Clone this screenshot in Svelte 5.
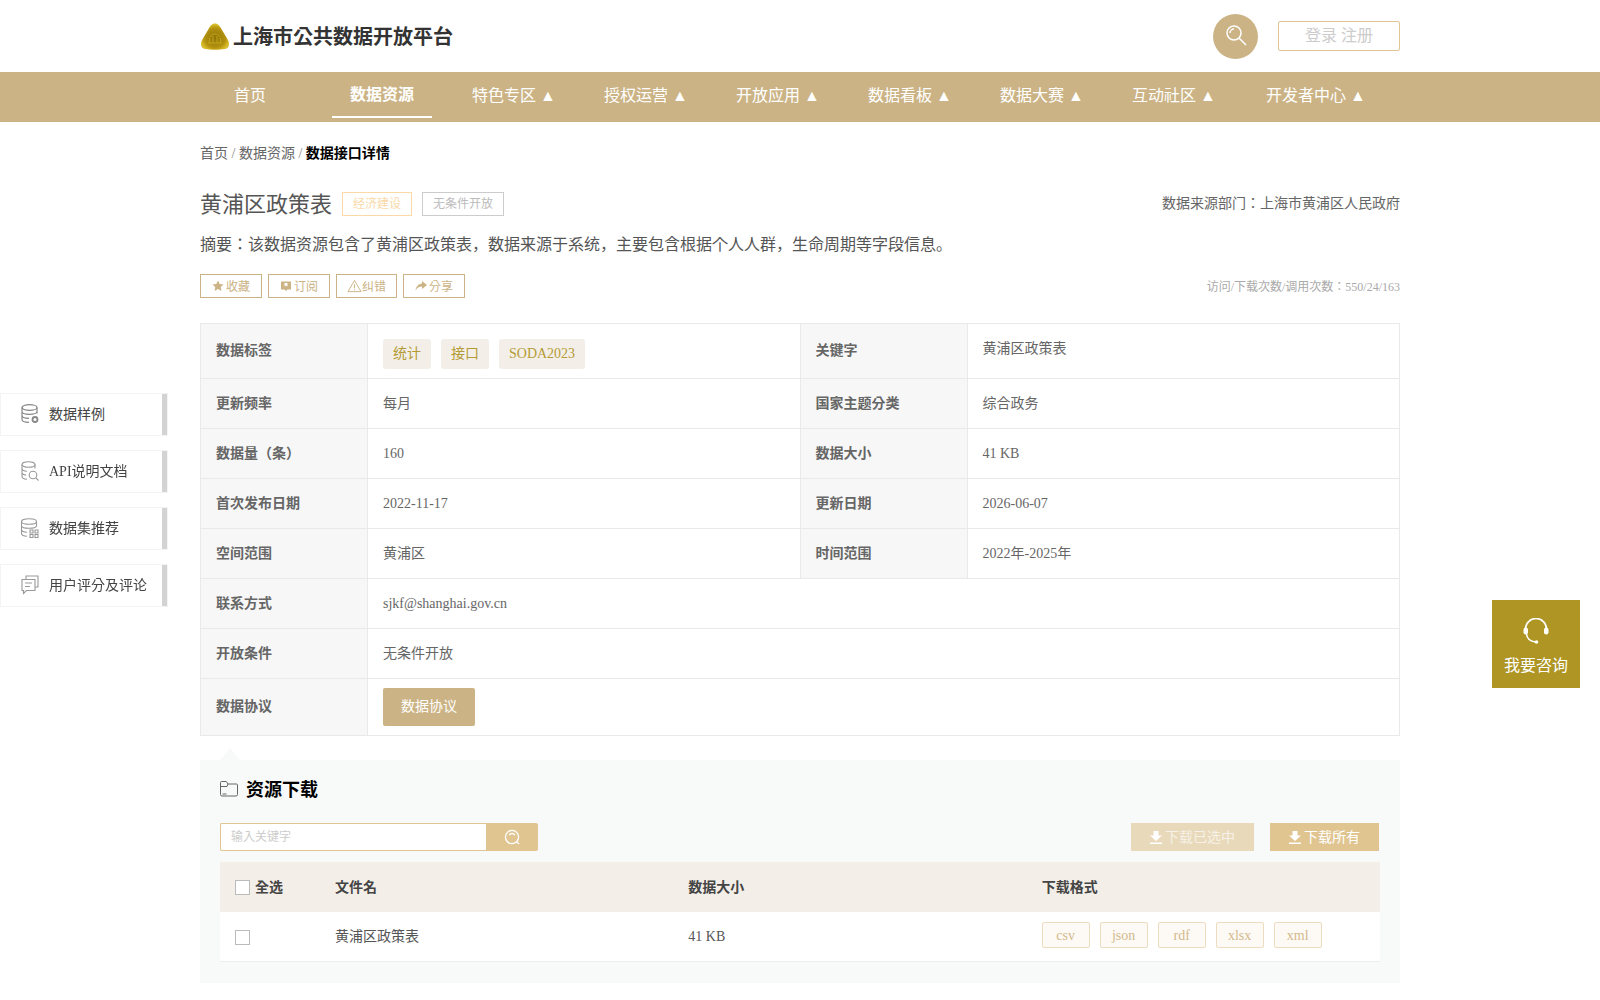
<script>
  const navItems = [
    { label: "首页" },
    { label: "数据资源", active: true },
    { label: "特色专区 ▲" },
    { label: "授权运营 ▲" },
    { label: "开放应用 ▲" },
    { label: "数据看板 ▲" },
    { label: "数据大赛 ▲" },
    { label: "互动社区 ▲" },
    { label: "开发者中心 ▲" },
  ];

  const rows = [
    ["更新频率", "每月", "国家主题分类", "综合政务"],
    ["数据量（条）", "160", "数据大小", "41 KB"],
    ["首次发布日期", "2022-11-17", "更新日期", "2026-06-07"],
    ["空间范围", "黄浦区", "时间范围", "2022年-2025年"],
  ];

  const formats = ["csv", "json", "rdf", "xlsx", "xml"];

  // han text sits lower than latin in the fallback font
  const isHan = (v) => /[\u4e00-\u9fff]/.test(v);
</script>

<header class="top wrap">
  <div class="brand">
    <svg class="logo" viewBox="0 0 30 27" width="30" height="27">
      <defs>
        <radialGradient id="gold" cx="50%" cy="55%" r="62%">
          <stop offset="0%" stop-color="#8f7408" />
          <stop offset="60%" stop-color="#b3920f" />
          <stop offset="88%" stop-color="#e2c52c" />
          <stop offset="100%" stop-color="#7b6006" />
        </radialGradient>
      </defs>
      <path
        d="M15 .5c3 0 5 2.500 7 6.500l6 10c2 4 1 8-3 9-6 1-14 1-20 0-4-1-5-5-3-9l6-10c2-4 4-6.500 7-6.500z"
        fill="url(#gold)"
      />
      <path
        d="M8 20h14M9.500 20v-5M13 20v-7M17 20v-7M20.500 20v-5M10 14c2-4 8-4 10 0"
        fill="none"
        stroke="#c2a31a"
        stroke-width="1"
      />
    </svg>
    <span>上海市公共数据开放平台</span>
  </div>
  <div class="top_right">
    <span class="search_circle">
      <svg viewBox="0 0 24 24" width="24" height="24" fill="none" stroke="#fff" stroke-width="1.500">
        <circle cx="10" cy="9" r="7" />
        <path d="M15 14l7 7M6 9a4 4 0 0 1 4-4" />
      </svg>
    </span>
    <a class="login" href="/">登录 注册</a>
  </div>
</header>

<nav>
  <ul class="wrap">
    {#each navItems as item}
      <li class:active={item.active}>{item.label}</li>
    {/each}
  </ul>
</nav>

<main class="wrap">
  <div class="crumbs">首页 <i>/</i> 数据资源 <i>/</i> <b>数据接口详情</b></div>

  <div class="title_row">
    <h1>黄浦区政策表</h1>
    <span class="tag orange">经济建设</span>
    <span class="tag grey">无条件开放</span>
    <span class="source">数据来源部门：上海市黄浦区人民政府</span>
  </div>

  <p class="abstract">摘要：该数据资源包含了黄浦区政策表，数据来源于系统，主要包含根据个人人群，生命周期等字段信息。</p>

  <div class="actions">
    <a href="/">
      <svg viewBox="0 0 12 12" width="12" height="12"><path d="M6 .5l1.700 3.400 3.800.5-2.700 2.700.6 3.800L6 9.100l-3.400 1.800.6-3.800L.5 4.400l3.800-.5z" fill="#cbb385" /></svg>
      收藏
    </a>
    <a href="/">
      <svg viewBox="0 0 12 12" width="12" height="12"><path d="M1 1.500h10v8H7.500L6 11 4.500 9.500H1zM4.500 3v3.600L6 5.600l1.500 1V3z" fill="#cbb385" fill-rule="evenodd" /></svg>
      订阅
    </a>
    <a class="tight" href="/">
      <svg viewBox="0 0 16 14" width="15" height="14" fill="none" stroke="#cbb385"><path d="M8 1l7 12H1zM8 5v4.500M8 10.500v1.200" /></svg>
      纠错
    </a>
    <a href="/">
      <svg viewBox="0 0 12 12" width="12" height="12"><path d="M7 1l5 4-5 4V6.600C4 6.600 2 7.800 .5 10.500 1 6.500 3.500 3.800 7 3.400z" fill="#cbb385" /></svg>
      分享
    </a>
    <span class="counts">访问/下载次数/调用次数：550/24/163</span>
  </div>

  <table class="info">
    <colgroup>
      <col class="c_label" />
      <col />
      <col class="c_label" />
      <col />
    </colgroup>
    <tbody>
      <tr class="first">
        <th>数据标签</th>
        <td>
          <div class="chips">
            <span>统计</span>
            <span>接口</span>
            <span>SODA2023</span>
          </div>
        </td>
        <th>关键字</th>
        <td class="raise">黄浦区政策表</td>
      </tr>
      {#each rows as r}
        <tr>
          <th>{r[0]}</th>
          <td class:han={isHan(r[1])}>{r[1]}</td>
          <th>{r[2]}</th>
          <td class:han={isHan(r[3])}>{r[3]}</td>
        </tr>
      {/each}
      <tr>
        <th>联系方式</th>
        <td colspan="3">sjkf@shanghai.gov.cn</td>
      </tr>
      <tr>
        <th>开放条件</th>
        <td class="han" colspan="3">无条件开放</td>
      </tr>
      <tr class="last">
        <th>数据协议</th>
        <td colspan="3"><a class="agreement" href="/">数据协议</a></td>
      </tr>
    </tbody>
  </table>

  <section class="resources">
    <h2>
      <svg viewBox="0 0 18 16" width="18" height="16" fill="none" stroke="#666">
        <path d="M.5 13.500v-12a1 1 0 0 1 1-1h4.800l1.700 2.500h8.500a1 1 0 0 1 1 1v9.500a1.500 1.500 0 0 1-1.500 1.500H2a1.500 1.500 0 0 1-1.500-1.500z" />
        <path d="M.5 5.500h6.500l1-2.500M2.500 13h4" />
      </svg>
      <span>资源下载</span>
    </h2>

    <div class="toolbar">
      <div class="search">
        <input type="text" placeholder="输入关键字" />
        <button aria-label="搜索">
          <svg viewBox="0 0 18 18" width="17" height="17" fill="none" stroke="#fff" stroke-width="1.400">
            <circle cx="8.500" cy="8.500" r="7" />
            <path d="M13.500 13.500l2.500 2.500M5.500 6.500a3.500 3.500 0 0 1 6 0" />
          </svg>
        </button>
      </div>
      <div class="downloads">
        <a class="dl pale" href="/">
          <svg viewBox="0 0 12 14" width="12" height="14" fill="#fff"><path d="M3.500 1h5v4.500H12L6 11 0 5.500h3.500zM0 12.500h12V14H0z" /></svg>
          <span>下载已选中</span>
        </a>
        <a class="dl" href="/">
          <svg viewBox="0 0 12 14" width="12" height="14" fill="#fff"><path d="M3.500 1h5v4.500H12L6 11 0 5.500h3.500zM0 12.500h12V14H0z" /></svg>
          <span>下载所有</span>
        </a>
      </div>
    </div>

    <div class="grid head">
      <div class="check_cell"><span class="box"></span><span>全选</span></div>
      <div>文件名</div>
      <div>数据大小</div>
      <div>下载格式</div>
    </div>
    <div class="grid row">
      <div class="check_cell"><span class="box"></span></div>
      <div class="lift">黄浦区政策表</div>
      <div>41 KB</div>
      <div class="formats">
        {#each formats as f}
          <a href="/">{f}</a>
        {/each}
      </div>
    </div>
  </section>
</main>

<aside class="side">
  <a href="#sample">
    <svg viewBox="0 0 18 20" width="18" height="20" fill="none" stroke="#888" stroke-width="1.200">
      <ellipse cx="8.500" cy="3.500" rx="7.500" ry="2.800" />
      <path d="M1 3.500v12c0 1.500 3 2.800 7 2.800M16 3.500v6M1 7.500c0 1.500 3 2.800 7.500 2.800s7.500-1.300 7.500-2.800M1 11.500c0 1.500 3 2.800 7 2.800" />
      <circle cx="14" cy="15.500" r="2.500" stroke-width="1.800" />
    </svg>
    <span>数据样例</span>
    <i></i>
  </a>
  <a href="#api">
    <svg viewBox="0 0 18 20" width="18" height="20" fill="none" stroke="#999" stroke-width="1.100">
      <ellipse cx="7.500" cy="3.500" rx="6.500" ry="2.800" />
      <path d="M1 3.500v12c0 1.500 2 2.500 5 2.700M14 3.500v4M1 7.500c0 1.500 2.500 2.600 5 2.700M1 11.500c0 1.500 2 2.400 4 2.600" />
      <circle cx="12" cy="14" r="3.800" />
      <path d="M14.800 16.800l2.700 2.700" />
    </svg>
    <span>API说明文档</span>
    <i></i>
  </a>
  <a href="#sets">
    <svg viewBox="0 0 18 20" width="18" height="20" fill="none" stroke="#999" stroke-width="1.100">
      <ellipse cx="8" cy="3.500" rx="7.500" ry="2.800" />
      <path d="M.5 3.500v12c0 1.500 2.500 2.600 5.500 2.800M15.500 3.500v5M.5 7.500c0 1.500 3 2.800 7.500 2.800s7.500-1.300 7.500-2.800M.5 11.500c0 1.500 2.500 2.600 5.500 2.800" />
      <path d="M9 12h3v3H9zM14 12h3v3h-3zM9 16.500h3v3H9zM14 16.500h3v3h-3z" />
    </svg>
    <span>数据集推荐</span>
    <i></i>
  </a>
  <a href="#comment">
    <svg viewBox="0 0 18 20" width="18" height="20" fill="none" stroke="#999" stroke-width="1.100">
      <path d="M5 4.500V1h12v11h-3" />
      <path d="M1 4.500h13v11H5.500L2.500 18.500v-3H1zM4 8h7M4 11.500h5" />
    </svg>
    <span>用户评分及评论</span>
    <i></i>
  </a>
</aside>

<a class="consult" href="/">
  <svg viewBox="0 0 26 26" width="26" height="26" fill="none" stroke="#fff" stroke-width="1.600">
    <path d="M2.500 12V11a10.500 10.500 0 0 1 21 0v1M3.500 16c.5 4.500 4 7.500 9 8" />
    <rect x="0.500" y="9.500" width="4.500" height="7" rx="2.200" fill="#fff" stroke="none" />
    <rect x="21" y="9.500" width="4.500" height="7" rx="2.200" fill="#fff" stroke="none" />
    <circle cx="13.500" cy="24" r="1.800" fill="#fff" stroke="none" />
  </svg>
  <span>我要咨询</span>
</a>

<style>
  :global(body) {
    background: #fff;
    font-family: "Liberation Serif", "Noto Sans CJK KR", serif;
    color: #666;
  }

  .wrap {
    width: 1200px;
    margin: 0 auto;
  }

  .top {
    height: 72px;
    display: flex;
    align-items: center;
    justify-content: space-between;
  }

  .brand {
    display: flex;
    align-items: center;
    gap: 3px;
    font-size: 20px;
    font-weight: bold;
    color: #333;

    & span {
      padding-bottom: 2px;
    }
  }

  .logo {
    display: block;
  }

  .top_right {
    display: flex;
    align-items: center;
    gap: 20px;
  }

  .search_circle {
    width: 45px;
    height: 45px;
    border-radius: 50%;
    background: #cbb385;
    display: flex;
    align-items: center;
    justify-content: center;
  }

  .login {
    width: 122px;
    height: 30px;
    box-sizing: border-box;
    border: 1px solid #e0c591;
    border-radius: 2px;
    font-size: 16px;
    color: #ccc;
    text-decoration: none;
    text-align: center;
    line-height: 28px;
  }

  nav {
    height: 50px;
    background: #cbb385;

    & ul {
      list-style: none;
      padding: 0;
      display: flex;
      gap: 32px;
    }

    & li {
      box-sizing: border-box;
      width: 100px;
      height: 46px;
      line-height: 48px;
      text-align: center;
      font-size: 16px;
      color: #fff;
      white-space: nowrap;
      display: flex;
      justify-content: center;
    }

    & li:last-child {
      width: 120px;
    }

    & li.active {
      font-weight: bold;
      line-height: 45px;
      border-bottom: 2px solid #fff;
    }
  }

  .crumbs {
    margin-top: 22px;
    height: 20px;
    line-height: 20px;
    font-size: 14px;
    color: #666;

    & i {
      font-style: normal;
      color: #888;
    }

    & b {
      color: #000;
    }
  }

  .title_row {
    margin-top: 28px;
    height: 24px;
    display: flex;
    align-items: center;

    & h1 {
      margin: 0 10px 4px 0;
      font-size: 22px;
      font-weight: normal;
      color: #555;
    }
  }

  .tag {
    box-sizing: border-box;
    height: 24px;
    line-height: 23px;
    padding: 0 10px;
    font-size: 12px;
    margin-right: 10px;
  }

  .orange {
    border: 1px solid #fbd9a6;
    color: #f9d9a9;
  }

  .grey {
    border: 1px solid #ccc;
    color: #bbb;
  }

  .source {
    margin-left: auto;
    padding-bottom: 4px;
    font-size: 14px;
    color: #666;
  }

  .abstract {
    margin: 17px 0 0;
    height: 24px;
    line-height: 24px;
    font-size: 16px;
    color: #555;
  }

  .actions {
    margin-top: 17px;
    height: 24px;
    display: flex;
    align-items: center;
    gap: 6px;

    & a {
      box-sizing: border-box;
      height: 24px;
      padding: 0 11px;
      border: 1px solid #cbb385;
      display: flex;
      align-items: center;
      gap: 2px;
      font-size: 12px;
      color: #cbb385;
      text-decoration: none;
    }

    & a.tight {
      padding: 0 10px;
      gap: 0;
    }
  }

  .counts {
    margin-left: auto;
    font-size: 12px;
    color: #aaa;
  }

  .info {
    margin-top: 25px;
    width: 1200px;
    table-layout: fixed;
    border-collapse: collapse;
    font-size: 14px;

    & th,
    & td {
      border: 1px solid #e9e9e9;
      padding: 0 15px;
      height: 50px;
      box-sizing: border-box;
      text-align: left;
    }

    & th {
      background: #f7f7f7;
      color: #666;
      font-weight: bold;
      padding-bottom: 4px;
    }

    & td {
      color: #666;
    }

    & td.han {
      padding-bottom: 4px;
    }

    & .first th,
    & .first td {
      height: 55px;
    }

    & .last th,
    & .last td {
      height: 57px;
    }

    & .first .raise {
      padding-bottom: 9px;
    }
  }

  .c_label {
    width: 167px;
  }

  .chips {
    display: flex;
    gap: 10px;
    margin-top: 6px;

    & span {
      height: 30px;
      line-height: 30px;
      padding: 0 10px;
      border-radius: 3px;
      background: #f3efe8;
      color: #b39b35;
    }
  }

  .agreement {
    display: block;
    width: 92px;
    height: 38px;
    line-height: 38px;
    text-align: center;
    border-radius: 2px;
    background: #cbb385;
    color: #fff;
    text-decoration: none;
  }

  .resources {
    position: relative;
    margin-top: 24px;
    padding: 17px 20px 21px;
    background: #f8f9f9;
  }

  .resources::before {
    content: "";
    position: absolute;
    left: 20px;
    top: -12px;
    border-left: 10px solid transparent;
    border-right: 10px solid transparent;
    border-bottom: 12px solid #f8f9f9;
  }

  h2 {
    margin: 0;
    height: 24px;
    display: flex;
    align-items: center;
    gap: 8px;
    font-size: 18px;
    color: #000;

    & span {
      padding-bottom: 2px;
    }
  }

  .toolbar {
    margin-top: 22px;
    display: flex;
    justify-content: space-between;
    align-items: center;
  }

  .search {
    display: flex;
    width: 318px;
    height: 28px;

    & input {
      box-sizing: border-box;
      width: 266px;
      height: 28px;
      padding: 1px 10px 0;
      border: 1px solid #e0c591;
      border-right: 0;
      border-radius: 2px 0 0 2px;
      outline: 0;
      font-size: 12px;
      font-family: inherit;
    }

    & input::placeholder {
      color: #ccc;
    }

    & button {
      flex: 1;
      border: 0;
      padding: 0;
      border-radius: 0 2px 2px 0;
      background: #e0c591;
      display: flex;
      align-items: center;
      justify-content: center;
    }
  }

  .downloads {
    display: flex;
    gap: 16px;
    margin-right: 1px;
  }

  .dl {
    height: 28px;
    padding: 0 19px;
    box-sizing: border-box;
    display: flex;
    align-items: center;
    justify-content: center;
    gap: 3px;
    background: #e0c591;
    color: #fff;
    font-size: 14px;
    text-decoration: none;

    & span {
      padding-bottom: 3px;
    }
  }

  .pale {
    background: #e9d9bb;
    color: #f6f1e6;
  }

  .grid {
    display: grid;
    grid-template-columns: 100px repeat(3, 1fr);
    align-items: center;
    font-size: 14px;

    & > div {
      padding-left: 15px;
    }
  }

  .head {
    margin-top: 11px;
    height: 50px;
    background: #f3efe8;
    font-weight: bold;
    color: #444;

    & > div {
      padding-bottom: 3px;
    }

    & .box {
      margin-top: 3px;
    }
  }

  .row {
    height: 50px;
    box-sizing: border-box;
    background: #fff;
    border-bottom: 1px solid #eee;
    color: #555;

    & .lift {
      padding-bottom: 3px;
    }
  }

  .check_cell {
    display: flex;
    align-items: center;
    gap: 5px;
  }

  .box {
    box-sizing: border-box;
    width: 15px;
    height: 15px;
    border: 1px solid #bbb;
    background: #fff;
    margin-top: 2px;
  }

  .formats {
    display: flex;
    gap: 10px;
    margin-top: -4px;

    & a {
      box-sizing: border-box;
      width: 48px;
      height: 26px;
      line-height: 25px;
      text-align: center;
      border: 1px solid #ecdcc0;
      border-radius: 2px;
      background: #fdfaf5;
      color: #d3b98c;
      text-decoration: none;
    }
  }

  .side {
    position: fixed;
    left: 0;
    top: 393px;
    display: flex;
    flex-direction: column;
    gap: 14px;

    & a {
      box-sizing: border-box;
      position: relative;
      width: 168px;
      height: 43px;
      padding-left: 20px;
      display: flex;
      align-items: center;
      gap: 10px;
      border: 1px solid #f4f4f4;
      background: #fff;
      font-size: 14px;
      color: #444;
      text-decoration: none;
    }

    & svg {
      margin-bottom: 2px;
    }

    & span {
      padding-bottom: 3px;
    }

    & i {
      position: absolute;
      right: 0;
      top: 0;
      width: 5px;
      height: 41px;
      background: #d3d3d3;
    }
  }

  .consult {
    position: fixed;
    left: 1492px;
    top: 600px;
    width: 88px;
    height: 88px;
    box-sizing: border-box;
    padding-top: 18px;
    background: #ae9524;
    color: #fff;
    font-size: 16px;
    text-decoration: none;
    text-align: center;
    display: flex;
    flex-direction: column;
    align-items: center;
    gap: 8px;
  }
</style>
